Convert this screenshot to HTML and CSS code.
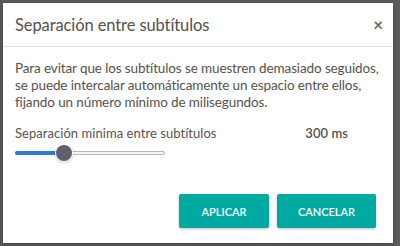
FILE: index.html
```html
<!DOCTYPE html>
<html lang="es">
<head>
    <meta charset="UTF-8">
    <meta name="viewport" content="width=device-width, initial-scale=1.0">
    <title>Separación entre subtítulos</title>
    <link rel="stylesheet" href="styles.css">
</head>
<body>

    <!-- Modal -->
    <div class="overlay">
        <div class="modal">
            <div class="modal-header">
                <h2 class="modal-title">Separación entre subtítulos</h2>
                <button class="close-btn">&times;</button>
            </div>

            <div class="modal-body">
                <p class="description">
                    Para evitar que los subtítulos se muestren demasiado seguidos,
                    se puede intercalar automáticamente un espacio entre ellos,
                    fijando un número mínimo de milisegundos.
                </p>

                <div class="setting-row">
                    <span class="setting-label">Separación minima entre subtítulos</span>
                    <span class="setting-value" id="gap-value">300 ms</span>
                </div>

                <div class="slider">
                    <div class="slider-fill" style="width: 48px"></div>
                    <div class="slider-thumb" style="left: 48px"></div>
                </div>
            </div>

            <div class="modal-footer">
                <button class="action-btn">APLICAR</button>
                <button class="action-btn">CANCELAR</button>
            </div>
        </div>
    </div>

</body>
</html>
```

FILE: styles.css
```css
* {
    margin: 0;
    padding: 0;
    box-sizing: border-box;
    font-family: Lato, "Noto Sans", sans-serif;
}

body {
    width: 400px;
    height: 246px;
    background-color: #5b5b5b;
    overflow: hidden;
}

.overlay {
    padding: 3px 7px 3px 3px;
}

/* Modal box */
.modal {
    background-color: #fff;
    height: 240px;
    display: flex;
    flex-direction: column;
    box-shadow: 0 1px 4px rgba(0, 0, 0, 0.3);
}

.modal-header {
    display: flex;
    justify-content: space-between;
    align-items: center;
    height: 44px;
    padding: 0 10px 0 12px;
    border-bottom: 1px solid #e3e3e3;
}

.modal-title {
    font-size: 16.5px;
    font-weight: normal;
    letter-spacing: -0.1px;
    color: #57524c;
}

.close-btn {
    background: none;
    border: none;
    font-size: 17px;
    font-weight: bold;
    color: #666;
    cursor: pointer;
}

.modal-body {
    padding: 13px 8px 0 12px;
    flex: 1;
}

.description {
    max-width: 368px;
    font-size: 13.5px;
    line-height: 17px;
    letter-spacing: -0.12px;
    color: #57524c;
}

.setting-row {
    display: flex;
    justify-content: space-between;
    margin-top: 14px;
    padding-right: 37px;
    font-size: 13px;
    letter-spacing: 0.05px;
    color: #57524c;
}

.setting-value {
    font-weight: 600;
}

/* Range slider */
.slider {
    position: relative;
    width: 150px;
    height: 4px;
    margin-top: 10px;
    border: 1px solid #b8b8c0;
    border-radius: 2px;
    background: #f4f4f6;
}

.slider-fill {
    position: absolute;
    top: -1px;
    left: -1px;
    height: 4px;
    border-radius: 2px;
    background: #2a7ad8;
}

.slider-thumb {
    position: absolute;
    top: -7px;
    width: 16px;
    height: 16px;
    margin-left: -8px;
    border-radius: 50%;
    background: #5d5f6e;
    box-shadow: 0 0 0 1px #fff, 0 1px 3px rgba(0, 0, 0, 0.4);
}

.modal-footer {
    display: flex;
    justify-content: flex-end;
    gap: 8px;
    padding: 0 17px 15px 0;
}

.action-btn {
    background: #00aaa1;
    border: none;
    color: white;
    font-size: 11px;
    font-weight: 600;
    padding: 0;
    height: 34px;
    width: 90px;
    border-radius: 2px;
    box-shadow: 0 1px 3px rgba(0, 0, 0, 0.25);
    cursor: pointer;
}

.action-btn:last-child {
    width: 99px;
}
```
